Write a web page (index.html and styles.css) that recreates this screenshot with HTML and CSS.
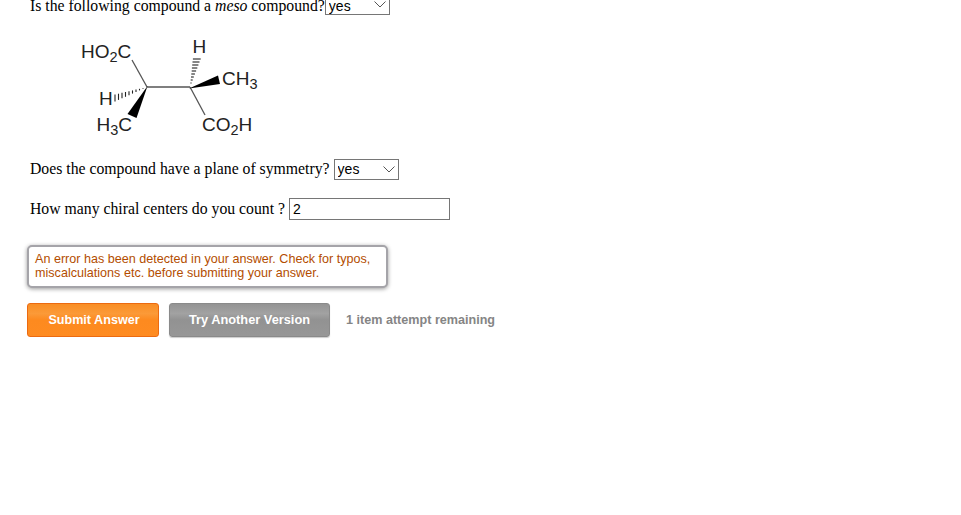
FILE: index.html
```html
<!DOCTYPE html>
<html lang="en">
<head>
<meta charset="utf-8">
<title>Meso compound question</title>
<link rel="stylesheet" href="styles.css">
</head>
<body>
<main class="page">
  <div class="question first">
    <label class="q-label">Is the following compound a <i>meso</i> compound?</label><select class="pick pick-a"><option>yes</option><option>no</option></select>
  </div>
  <svg class="molecule" width="240" height="130" viewBox="27 15 240 130" role="img" aria-label="Structure of the compound">
    <g class="bond">
      <line x1="132" y1="60" x2="147" y2="87"/>
      <line x1="147" y1="87" x2="190" y2="87"/>
      <line x1="190" y1="87" x2="205" y2="115"/>
    </g>
    <polygon class="wedge" points="147.5,86 127.5,114 136.5,118"/>
    <polygon class="wedge" points="189,88.5 218,75.5 220,84"/>
    <g class="hash">
      <line x1="143" y1="88" x2="143" y2="88.8"/><line x1="139.5" y1="88.8" x2="139.5" y2="90.4"/><line x1="136" y1="89.6" x2="136" y2="92"/><line x1="132.5" y1="90.4" x2="132.5" y2="93.6"/><line x1="129" y1="91.2" x2="129" y2="95.2"/><line x1="125.5" y1="92" x2="125.5" y2="96.8"/><line x1="122" y1="92.85" x2="122" y2="98.35"/><line x1="118.5" y1="93.7" x2="118.5" y2="99.9"/><line x1="115" y1="94.5" x2="115" y2="101.5"/>
      <line x1="190.4" y1="83" x2="191.6" y2="83"/><line x1="190.7" y1="80" x2="192.7" y2="80"/><line x1="191" y1="77" x2="193.8" y2="77"/><line x1="191.3" y1="74" x2="194.9" y2="74"/><line x1="191.7" y1="71" x2="196.1" y2="71"/><line x1="191.9" y1="68" x2="197.3" y2="68"/><line x1="192.2" y1="65" x2="198.4" y2="65"/><line x1="192.5" y1="62" x2="199.5" y2="62"/><line x1="192.9" y1="59" x2="200.7" y2="59"/>
    </g>
    <g class="atoms">
      <text x="81" y="58">HO<tspan class="sub" dy="4">2</tspan><tspan dy="-4">C</tspan></text>
      <text x="192.5" y="53">H</text>
      <text x="222" y="85">CH<tspan class="sub" dy="4">3</tspan></text>
      <text x="99" y="105">H</text>
      <text x="96.5" y="131">H<tspan class="sub" dy="4">3</tspan><tspan dy="-4">C</tspan></text>
      <text x="202" y="131">CO<tspan class="sub" dy="4">2</tspan><tspan dy="-4">H</tspan></text>
    </g>
  </svg>
  <div class="question second">
    <label class="q-label">Does the compound have a plane of symmetry?</label> <select class="pick pick-b"><option>yes</option><option>no</option></select>
  </div>
  <div class="question third">
    <label class="q-label">How many chiral centers do you count ?</label> <input class="count" type="text" value="2">
  </div>
  <div class="alert">An error has been detected in your answer. Check for typos, miscalculations etc. before submitting your answer.</div>
  <div class="actions">
    <button class="btn submit" type="button">Submit Answer</button>
    <button class="btn another" type="button">Try Another Version</button>
    <span class="attempts">1 item attempt remaining</span>
  </div>
</main>
</body>
</html>
```
FILE: styles.css
```css
html, body { margin: 0; padding: 0; background: #fff; }
body { overflow: hidden; height: 515px; }
.page { padding-left: 27px; margin-top: -6px; }
.question { padding-left: 3px; font: 15.76px/20px "Liberation Serif", serif; color: #000; display: flex; align-items: center; }
.q-label { white-space: pre; }
.first { height: 21px; }
.first .q-label { padding-top: 2px; }
.second { margin-top: 14px; height: 21px; }
.second .q-label { margin-top: -2px; }
.third { margin-top: 18px; height: 22px; }
.pick { appearance: none; -webkit-appearance: none; box-sizing: border-box; height: 21px; margin: 0; padding: 0 0 2px 3px; border: 1px solid #767676; border-radius: 0; font: 14px "Liberation Sans", sans-serif; color: #000;
  background: #fff url("data:image/svg+xml,%3Csvg xmlns='http://www.w3.org/2000/svg' width='12' height='7'%3E%3Cpath d='M.5.5l5.5 5.5 5.5-5.5' fill='none' stroke='%23555'/%3E%3C/svg%3E") no-repeat right 3px center; }
.pick-a { width: 65px; padding: 3px 0 0 3px; }
.pick-b { width: 65px; margin-left: 4px; }
.count { box-sizing: border-box; width: 161px; height: 22px; margin: 0 0 0 4px; padding: 0 3px; border: 1px solid #767676; font: 14px "Liberation Sans", sans-serif; color: #000; outline: 0; }
.molecule { display: block; }
.bond line { stroke: #555; stroke-width: 1.3; }
.wedge { fill: #000; }
.hash line { stroke: #222; stroke-width: 1.1; }
.atoms text { font: 19px "Liberation Sans", sans-serif; fill: #222; }
.atoms .sub { font-size: 14.5px; }
.alert { box-sizing: border-box; width: 361px; height: 43px; margin-top: 25px; padding: 5px 6px; border: 2px solid #a5a4a9; border-radius: 5px; box-shadow: 0 1px 4px rgba(0,0,0,.4); font: 12.6px/14px "Liberation Sans", sans-serif; color: #b34d00; background: #fff; }
.actions { display: flex; align-items: center; margin-top: 15px; }
.btn { box-sizing: border-box; height: 34px; margin: 0; padding: 0 0 0 2px; border-radius: 3px; color: #fff; font: bold 12.6px "Liberation Sans", sans-serif; }
.submit { width: 132px; border: 1px solid #ec6a10; background: linear-gradient(#f98e25 0, #fb9a38 30%, #fd8a1f 50%, #fe8b21 100%); }
.another { width: 161px; margin-left: 10px; padding: 0 0 2px; border: 1px solid #8a8a8a; font-size: 12.8px; background: linear-gradient(#949494, #a2a2a2 30%, #929292 50%, #979797); box-shadow: 0 1px 1px rgba(0,0,0,.2); }
.attempts { margin-left: 16px; font: bold 12.6px "Liberation Sans", sans-serif; color: #858585; }
```
